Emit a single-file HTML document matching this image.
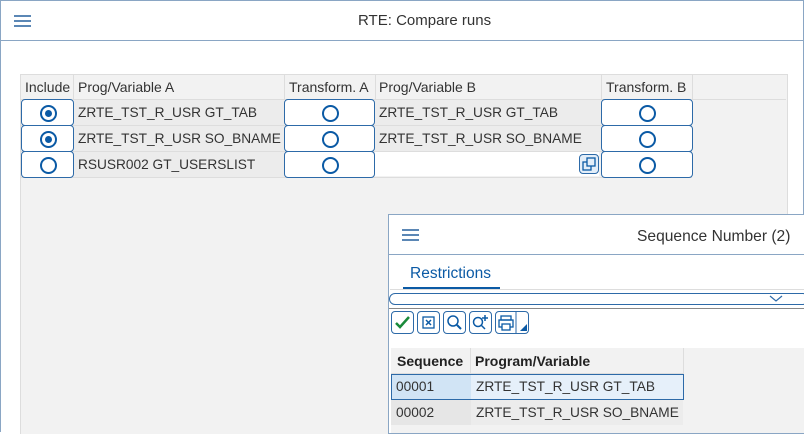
<html><head><style>
body{margin:0;width:804px;height:433px;overflow:hidden;background:#fff;font-family:"Liberation Sans",Arial,sans-serif;position:relative}
.a{position:absolute}
.rb{position:absolute;border:1px solid #2d6aa8;border-radius:4px;background:#fff;box-sizing:border-box}
.rb i{position:absolute;left:50%;top:50%;width:13px;height:13px;margin:-8px 0 0 -8px;border:2px solid #0b5aa5;border-radius:50%;}
.rb i.s::after{content:"";position:absolute;left:3px;top:3px;width:7px;height:7px;border-radius:50%;background:#0b5aa5}
.t{position:absolute;font-size:13.7px;color:#333;white-space:nowrap}
.ham{position:absolute;width:17px;height:2px;background:#5b87b5;box-shadow:0 5px 0 #5b87b5,0 10px 0 #5b87b5}
.tb{position:absolute;top:311px;width:23px;height:23px;border:1px solid #2d6aa8;border-radius:4px;box-sizing:border-box;background:#fff}
</style></head><body>
<div class="a" style="left:0;top:0;width:802px;height:431px;border:1px solid #8aa6c4;border-bottom:none"></div>
<div class="ham" style="left:14px;top:15px"></div>
<div class="t" style="left:358px;top:12px;font-size:15px">RTE: Compare runs</div>
<div class="a" style="left:1px;top:40px;width:802px;height:1px;background:#8aa6c4"></div>
<div class="a" style="left:20px;top:74px;width:766px;height:359px;background:#f2f2f2;border:1px solid #ddd;border-bottom:none"></div>
<div class="a" style="left:21px;top:99px;width:765px;height:1px;background:#ddd"></div>
<div class="a" style="left:73px;top:75px;width:1px;height:24px;background:#ddd"></div>
<div class="a" style="left:284px;top:75px;width:1px;height:24px;background:#ddd"></div>
<div class="a" style="left:375px;top:75px;width:1px;height:24px;background:#ddd"></div>
<div class="a" style="left:601px;top:75px;width:1px;height:24px;background:#ddd"></div>
<div class="a" style="left:692px;top:75px;width:1px;height:24px;background:#ddd"></div>
<div class="t" style="left:25px;top:79px;font-size:14px">Include</div>
<div class="t" style="left:78px;top:79px;font-size:14px">Prog/Variable A</div>
<div class="t" style="left:289px;top:79px;font-size:14px">Transform. A</div>
<div class="t" style="left:379px;top:79px;font-size:14px">Prog/Variable B</div>
<div class="t" style="left:606px;top:79px;font-size:14px">Transform. B</div>
<div class="a" style="left:73px;top:100px;width:211px;height:77px;background:#ececec"></div>
<div class="a" style="left:375px;top:100px;width:226px;height:51px;background:#ececec"></div>
<div class="a" style="left:375px;top:151px;width:224px;height:25px;background:#fff"></div>
<div class="a" style="left:21px;top:125px;width:671px;height:1px;background:#ddd"></div>
<div class="a" style="left:21px;top:151px;width:671px;height:1px;background:#ddd"></div>
<div class="a" style="left:21px;top:177px;width:671px;height:1px;background:#ddd"></div>
<div class="rb" style="left:21px;top:99px;width:53px;height:27px"><i class="s"></i></div>
<div class="rb" style="left:21px;top:125px;width:53px;height:27px"><i class="s"></i></div>
<div class="rb" style="left:21px;top:151px;width:53px;height:27px"><i></i></div>
<div class="rb" style="left:284px;top:99px;width:91px;height:27px"><i></i></div>
<div class="rb" style="left:284px;top:125px;width:91px;height:27px"><i></i></div>
<div class="rb" style="left:284px;top:151px;width:91px;height:27px"><i></i></div>
<div class="rb" style="left:601px;top:99px;width:92px;height:27px"><i></i></div>
<div class="rb" style="left:601px;top:125px;width:92px;height:27px"><i></i></div>
<div class="rb" style="left:601px;top:151px;width:92px;height:27px"><i></i></div>
<div class="t" style="left:78px;top:105px">ZRTE_TST_R_USR GT_TAB</div>
<div class="t" style="left:78px;top:131px">ZRTE_TST_R_USR SO_BNAME</div>
<div class="t" style="left:78px;top:157px">RSUSR002 GT_USERSLIST</div>
<div class="t" style="left:379px;top:105px">ZRTE_TST_R_USR GT_TAB</div>
<div class="t" style="left:379px;top:131px">ZRTE_TST_R_USR SO_BNAME</div>
<div class="a" style="left:579px;top:154px;width:20px;height:20px;border:1px solid #2d6aa8;border-radius:4px;background:#e3eef9;box-sizing:border-box">
<svg width="18" height="18" viewBox="0 0 18 18" style="position:absolute;left:0;top:0"><rect x="3" y="7" width="8" height="8" fill="none" stroke="#0b5aa5" stroke-width="1.3"/><rect x="7" y="3" width="8" height="8" fill="#e3eef9" stroke="#0b5aa5" stroke-width="1.3"/></svg></div>
<div class="a" style="left:388px;top:214px;width:420px;height:220px;background:#fff;border:1px solid #8aa6c4;box-sizing:border-box"></div>
<div class="ham" style="left:402px;top:229px"></div>
<div class="t" style="left:637px;top:228px;font-size:15.6px">Sequence Number (2)</div>
<div class="a" style="left:389px;top:254px;width:415px;height:1px;background:#8aa6c4"></div>
<div class="t" style="left:410px;top:265px;font-size:15.5px;color:#0b5aa5">Restrictions</div>
<div class="a" style="left:403px;top:287px;width:97px;height:3px;background:#0b5aa5"></div>
<div class="a" style="left:390px;top:289px;width:414px;height:1px;background:#ddd"></div>
<div class="a" style="left:389px;top:293px;width:420px;height:12px;border:1px solid #2d6aa8;border-radius:6px;box-sizing:border-box"></div>
<svg class="a" style="left:769px;top:295px" width="14" height="8"><path d="M1 1L7 6L13 1" fill="none" stroke="#2d6aa8" stroke-width="1.2"/></svg>
<div class="a" style="left:389px;top:308px;width:415px;height:1px;background:#888"></div>
<div class="tb" style="left:391px"><svg width="21" height="21"><path d="M4 11L8 15L17 5" fill="none" stroke="#1a8a3a" stroke-width="2.5"/></svg></div>
<div class="tb" style="left:417px"><svg width="21" height="21"><rect x="5" y="5" width="11" height="11" fill="none" stroke="#0b5aa5" stroke-width="1.3"/><path d="M8 8L13 13M13 8L8 13" stroke="#0b5aa5" stroke-width="1.5"/></svg></div>
<div class="tb" style="left:443px"><svg width="21" height="21"><circle cx="9" cy="9" r="5" fill="none" stroke="#0b5aa5" stroke-width="1.5"/><path d="M13 13L17 17" stroke="#0b5aa5" stroke-width="2"/></svg></div>
<div class="tb" style="left:469px"><svg width="21" height="21"><circle cx="8" cy="10" r="4.5" fill="none" stroke="#0b5aa5" stroke-width="1.5"/><path d="M11 13L15 17M15 3V9M12 6H18" stroke="#0b5aa5" stroke-width="1.5"/></svg></div>
<div class="tb" style="left:495px;width:34px"><svg width="32" height="21"><rect x="5" y="4" width="10" height="4" fill="none" stroke="#0b5aa5" stroke-width="1.3"/><rect x="3" y="8" width="14" height="7" fill="none" stroke="#0b5aa5" stroke-width="1.3"/><rect x="6" y="12" width="8" height="6" fill="#fff" stroke="#0b5aa5" stroke-width="1.3"/><path d="M20 0V21" stroke="#2d6aa8"/><path d="M24 19L31 19L31 12Z" fill="#0b5aa5"/></svg></div>
<div class="a" style="left:391px;top:348px;width:413px;height:85px;background:#f2f2f2"></div>
<div class="a" style="left:391px;top:348px;width:292px;height:25px;border-bottom:1px solid #ddd;border-right:1px solid #ddd"></div>
<div class="a" style="left:470px;top:348px;width:1px;height:77px;background:#ddd"></div>
<div class="t" style="left:397px;top:353px;font-weight:bold;color:#222;font-size:14px">Sequence</div>
<div class="t" style="left:475px;top:353px;font-weight:bold;color:#222;font-size:14px">Program/Variable</div>
<div class="a" style="left:391px;top:374px;width:80px;height:25px;background:#d1e4f5"></div>
<div class="a" style="left:471px;top:374px;width:212px;height:25px;background:#e6f0fa"></div>
<div class="a" style="left:391px;top:374px;width:293px;height:26px;border:1px solid #2d6aa8;box-sizing:border-box"></div>
<div class="a" style="left:391px;top:400px;width:80px;height:25px;background:#e6e6e6"></div>
<div class="a" style="left:471px;top:400px;width:212px;height:25px;background:#ececec"></div>
<div class="t" style="left:396px;top:379px">00001</div>
<div class="t" style="left:476px;top:379px">ZRTE_TST_R_USR GT_TAB</div>
<div class="t" style="left:396px;top:405px">00002</div>
<div class="t" style="left:476px;top:405px">ZRTE_TST_R_USR SO_BNAME</div>
</body></html>
